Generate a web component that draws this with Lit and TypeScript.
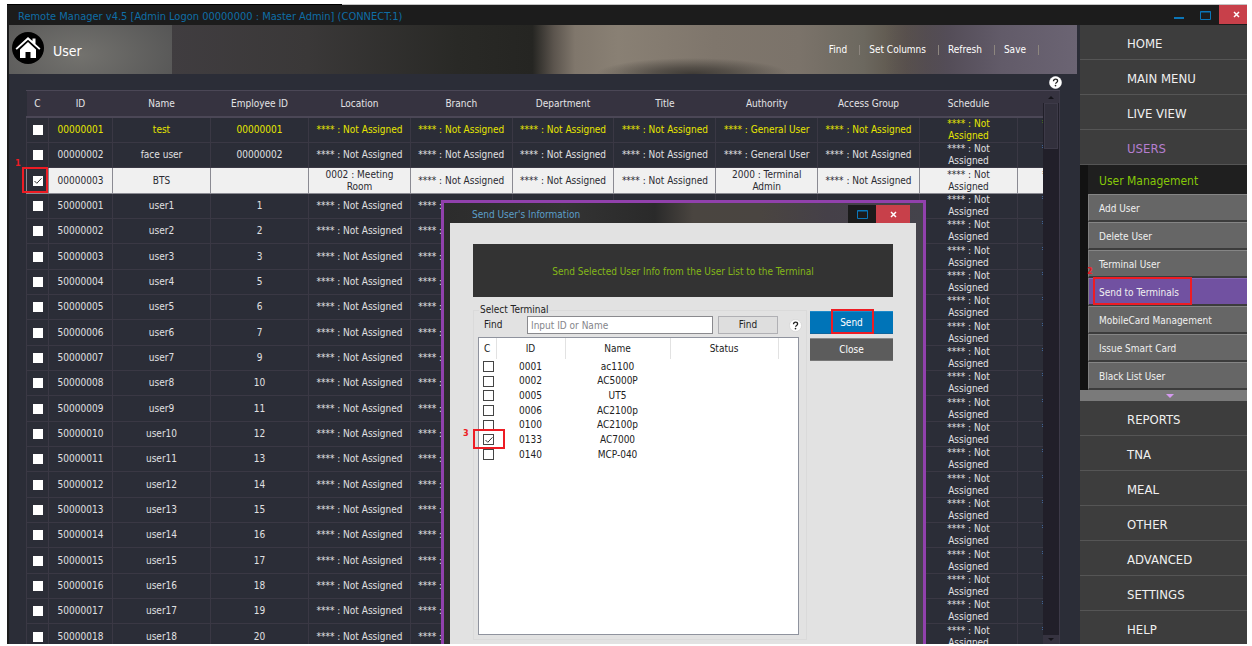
import { LitElement, html, css, svg } from "lit";
import { customElement, state } from "lit/decorators.js";
import { classMap } from "lit/directives/class-map.js";

interface User {
  id: string;
  name: string;
  emp: string;
  location?: string;
  authority?: string;
  tone?: string;
}

const NA = "**** : Not Assigned";

const users: User[] = [
  { id: "00000001", name: "test", emp: "00000001", authority: "**** : General User", tone: "admin" },
  { id: "00000002", name: "face user", emp: "00000002", authority: "**** : General User" },
  { id: "00000003", name: "BTS", emp: "", location: "0002 : Meeting Room", authority: "2000 : Terminal Admin", tone: "picked" },
  ...[1, 2, 3, 5, 6, 7, 9, 10, 11, 12, 13, 14, 15, 16, 17, 18, 19, 20].map((emp, i) => ({
    id: String(50000001 + i),
    name: `user${i + 1}`,
    emp: String(emp),
  })),
];

const columns = ["C", "ID", "Name", "Employee ID", "Location", "Branch", "Department", "Title", "Authority", "Access Group", "Schedule", ""];

const terminals: [string, string][] = [
  ["0001", "ac1100"],
  ["0002", "AC5000P"],
  ["0005", "UT5"],
  ["0006", "AC2100p"],
  ["0100", "AC2100p"],
  ["0133", "AC7000"],
  ["0140", "MCP-040"],
];

const checkbox = css`
  input[type="checkbox"] {
    appearance: none;
    display: block;
    margin: 0 auto;
    width: 10px;
    height: 10px;
    background: #fff;
  }
  input[type="checkbox"]:checked {
    background: #fff
      url("data:image/svg+xml,%3Csvg xmlns='http://www.w3.org/2000/svg' viewBox='0 0 10 10'%3E%3Cpath d='M1.5 5l2.300 2.300 4.700-5' fill='none' stroke='%23333' stroke-width='1'/%3E%3C/svg%3E")
      center / 10px 10px no-repeat;
  }
`;

const mark = css`
  .mark {
    position: absolute;
    border: 2px solid #ed1c24;
    pointer-events: none;
    z-index: 2;
  }
  .step {
    position: absolute;
    color: #ed1c24;
    font-size: 9px;
    font-weight: bold;
    line-height: 10px;
    z-index: 2;
  }
`;

const reset = css`
  * {
    box-sizing: border-box;
  }
  button {
    font: inherit;
    color: inherit;
    background: none;
    border: 0;
    padding: 0;
    margin: 0;
  }
  a {
    color: inherit;
    text-decoration: none;
  }
`;

const help = (ring: string) => svg`
  <svg width="13" height="13" viewBox="0 0 13 13">
    <circle cx="6.5" cy="6.5" r="6" fill="#fff" stroke=${ring} stroke-width="0.6"/>
    <path d="M4.5 5.2c0-1.3.9-2 2-2s2.100.7 2.100 1.800c0 1.500-2 1.500-2 2.800" fill="none" stroke="#222" stroke-width="1.300"/>
    <circle cx="6.500" cy="9.600" r="0.850" fill="#222"/>
  </svg>`;

@customElement("user-table")
class UserTable extends LitElement {
  @state() private checked = new Set(["00000003"]);

  static styles = [
    reset,
    checkbox,
    mark,
    css`
      :host {
        display: flex;
        min-height: 0;
        min-width: 0;
        border-top: 1px solid #4b4756;
      }
      .scroll {
        flex: 1;
        min-width: 0;
        margin-left: -26px;
        padding-left: 26px;
        overflow: hidden;
      }
      table {
        border-collapse: collapse;
        table-layout: fixed;
        width: 1084px;
      }
      .c0 { width: 22px; }
      .c1 { width: 64px; }
      .c2, .c3, .c10 { width: 98px; }
      .c11 { width: 92px; }
      th {
        height: 26px;
        padding: 0;
        font-weight: normal;
        color: #e4e4e6;
        background: #363340;
        border-bottom: 2px solid #4b4756;
      }
      td {
        height: 25px;
        padding: 0 3px;
        line-height: 12px;
        text-align: center;
        color: #e0e0e2;
        border: 1px solid #3a3844;
        border-top: 0;
      }
      tr:nth-child(3n) td { height: 26px; }
      td:nth-child(11), td:nth-child(12) { padding: 0 16px; }
      .select { padding: 0; position: relative; }
      .admin td { color: #e6e600; }
      .picked td {
        color: #2a2a30;
        background: #f0f0f0;
        border-color: #8a8a92;
      }
      .picked .select {
        background: transparent;
      }
      .mark { left: -5px; top: -1px; width: 26px; height: 26px; }
      .step { left: -12px; top: -10px; }
      .bar {
        width: 17px;
        background: #211f29;
        border-right: 1px solid #3d3a48;
        display: flex;
        flex-direction: column;
        align-items: center;
      }
      .up, .down {
        width: 100%;
        height: 12px;
        background: #363340;
        display: grid;
        place-items: center;
      }
      .thumb { width: 14px; height: 46px; background: #32303c; border: 1px solid #3d3a48; }
      .down { margin-top: auto; height: 9px; }
    `,
  ];

  private toggle(id: string) {
    const next = new Set(this.checked);
    next.has(id) ? next.delete(id) : next.add(id);
    this.checked = next;
  }

  render() {
    return html`
      <div class="scroll">
        <table>
          <colgroup>${columns.map((_, i) => html`<col class="c${i}" />`)}</colgroup>
          <thead><tr>${columns.map((c) => html`<th scope="col">${c}</th>`)}</tr></thead>
          <tbody>
            ${users.map(
              (u) => html`<tr class=${u.tone ?? ""}>
                <td class="select">
                  <input type="checkbox" aria-label="Select ${u.id}" .checked=${this.checked.has(u.id)} @change=${() => this.toggle(u.id)} />
                  ${u.tone === "picked" ? html`<span class="step">1</span><span class="mark"></span>` : ""}
                </td>
                <td>${u.id}</td><td>${u.name}</td><td>${u.emp}</td>
                <td>${u.location ?? NA}</td><td>${NA}</td><td>${NA}</td><td>${NA}</td>
                <td>${u.authority ?? NA}</td><td>${NA}</td><td>${NA}</td><td>${NA}</td>
              </tr>`
            )}
          </tbody>
        </table>
      </div>
      <div class="bar">
        <div class="up"><svg width="6" height="3"><path d="M0 3L3 0l3 3z" fill="#15141a" /></svg></div>
        <div class="thumb"></div>
        <div class="down"><svg width="6" height="3"><path d="M0 0l3 3 3-3z" fill="#15141a" /></svg></div>
      </div>
    `;
  }
}

@customElement("send-dialog")
class SendDialog extends LitElement {
  @state() private checked = new Set(["0133"]);

  static styles = [
    reset,
    checkbox,
    mark,
    css`
      :host {
        box-sizing: border-box;
        display: flex;
        flex-direction: column;
        padding: 0 7px 0 6px;
        border: 3px solid #9141ac;
        border-bottom: 0;
        background: linear-gradient(90deg, #2c2c2c, #333 25%, #2a2a2a 44%, #4a4540 52%, #4a4541 66%, #454048 80%, #44434b);
        color: #222;
      }
      .title {
        display: flex;
        align-items: center;
        height: 20px;
        padding: 2px 6px 0 22px;
        color: #5c9fc9;
      }
      .title span { flex: 1; padding-top: 2px; }
      .win { width: 28px; height: 18px; display: grid; place-items: center; background: #1b1b1b; }
      .close { width: 34px; background: #c8404a; }
      .body {
        flex: 1;
        min-height: 0;
        padding: 21px 23px 0;
        background: #e2e2e2;
      }
      .note {
        height: 53px;
        padding-top: 2px;
        display: grid;
        place-items: center;
        color: #84b818;
        background: #333;
      }
      .main { display: flex; gap: 3px; margin-top: 7px; align-items: flex-start; }
      fieldset {
        flex: 1;
        min-width: 0;
        margin: 0;
        padding: 0 4px 4px;
        border: 1px solid #dadada;
      }
      legend { margin-left: 1px; padding: 0 1px; line-height: 12px; }
      .find { display: flex; align-items: center; height: 18px; padding-left: 6px; }
      .find label { width: 43px; }
      .query {
        flex: 1;
        min-width: 0;
        height: 18px;
        padding: 0 3px;
        font: inherit;
        border: 1px solid #8a8a8e;
        border-radius: 0;
        background: #fff;
      }
      .query::placeholder { color: #85858a; opacity: 1; }
      .find button { width: 60px; height: 18px; margin: 0 11px 0 5px; border: 1px solid #b0b0b4; background: #dedede; }
      .find svg { display: block; }
      .list { height: 298px; margin: 3px 3px 0 0; background: #fff; border: 1px solid #8f939e; }
      table { border-collapse: collapse; table-layout: fixed; width: 100%; text-align: center; }
      th, td { padding: 0; font-weight: normal; }
      th { height: 21px; border-right: 1px solid #e2e2e2; }
      th:last-child { border: 0; }
      td { height: 15px; line-height: 14px; position: relative; }
      tr:nth-child(3n + 2) td { height: 14px; }
      .k0 { width: 17px; }
      .k1 { width: 69px; }
      .k2 { width: 105px; }
      .k3 { width: 108px; }
      td input[type="checkbox"] { width: 11px; height: 11px; margin-left: 4px; border: 1px solid #444; }
      .actions { width: 83px; padding-top: 7px; display: flex; flex-direction: column; gap: 4px; }
      .actions button {
        height: 23px;
        color: #fff;
        background: #5c5c5c;
        border-top: 1px solid #8a8a8a;
        border-bottom: 1px solid #777;
      }
      .actions .send { position: relative; background: #0074b8; border-top-color: #1d8aca; border-bottom-color: #10659c; }
      .send .mark { left: 21px; top: -3px; width: 43px; height: 25px; }
      td .mark { left: -6px; top: -3px; width: 32px; height: 20px; }
      td .step { left: -16px; top: -4px; }
    `,
  ];

  private toggle(id: string) {
    const next = new Set(this.checked);
    next.has(id) ? next.delete(id) : next.add(id);
    this.checked = next;
  }

  render() {
    return html`
      <div class="title">
        <span>Send User's Information</span>
        <button class="win" aria-label="Maximize"><svg width="11" height="10"><path d="M.5 1.500h10v8H.500zM.500 2h10" fill="none" stroke="#0b76b8" /></svg></button>
        <button class="win close" aria-label="Close"><svg width="7" height="7"><path d="M1 1l5 5M6 1L1 6" stroke="#fff" stroke-width="1.500" /></svg></button>
      </div>
      <div class="body">
        <div class="note">Send Selected User Info from the User List to the Terminal</div>
        <div class="main">
          <fieldset>
            <legend>Select Terminal</legend>
            <div class="find">
              <label for="query">Find</label>
              <input id="query" class="query" type="text" placeholder="Input ID or Name" />
              <button>Find</button>
              ${help("#ccc")}
            </div>
            <div class="list">
              <table>
                <colgroup><col class="k0" /><col class="k1" /><col class="k2" /><col class="k3" /><col /></colgroup>
                <thead><tr><th>C</th><th>ID</th><th>Name</th><th>Status</th><th></th></tr></thead>
                <tbody>
                  ${terminals.map(
                    ([id, name]) => html`<tr>
                      <td>
                        <input type="checkbox" aria-label="Select ${id}" .checked=${this.checked.has(id)} @change=${() => this.toggle(id)} />
                        ${id === "0133" ? html`<span class="step">3</span><span class="mark"></span>` : ""}
                      </td>
                      <td>${id}</td><td>${name}</td><td></td><td></td>
                    </tr>`
                  )}
                </tbody>
              </table>
            </div>
          </fieldset>
          <div class="actions">
            <button class="send">Send<span class="mark"></span></button>
            <button>Close</button>
          </div>
        </div>
      </div>
    `;
  }
}

@customElement("side-menu")
class SideMenu extends LitElement {
  static styles = [
    reset,
    mark,
    css`
      :host { display: block; background: #3d3d3d; color: #f0f0f0; }
      .item {
        display: flex;
        align-items: center;
        height: 35px;
        padding: 3px 0 0 47px;
        font-size: 13px;
        border-bottom: 1px solid #555;
      }
      .current { color: #b57fd0; }
      .sub { padding-left: 8px; background: #121212; }
      .head { display: flex; align-items: center; height: 29px; padding: 3px 0 0 11px; font-size: 12px; color: #86c808; background: #1f1f1f; }
      .entry {
        position: relative;
        display: flex;
        align-items: center;
        height: 28px;
        padding: 3px 0 0 10px;
        background: #666;
        border: solid #3c3c3c;
        border-width: 0 0 2px;
        border-left: 1px solid #808080;
        box-shadow: inset 0 1px #858585;
      }
      .on { background: #7151a1; box-shadow: inset 0 1px #8567b3; }
      .more { width: 100%; height: 11px; padding-left: 12px; display: grid; place-items: center; background: #7a7a7a; }
      .mark { left: 4px; top: -1px; width: 99px; height: 28px; }
      .step { left: -2px; top: -12px; }
    `,
  ];

  render() {
    const item = (t: string) => html`<a href="#" class=${classMap({ item: true, current: t === "USERS" })}>${t}</a>`;
    return html`
      <nav>
        ${["HOME", "MAIN MENU", "LIVE VIEW", "USERS"].map(item)}
        <div class="sub">
          <div class="head">User Management</div>
          ${["Add User", "Delete User", "Terminal User", "Send to Terminals", "MobileCard Management", "Issue Smart Card", "Black List User"].map((t) => {
            const on = t === "Send to Terminals";
            return html`<a href="#" class=${classMap({ entry: true, on })}>${t}${on ? html`<span class="step">2</span><span class="mark"></span>` : ""}</a>`;
          })}
        </div>
        <button class="more" aria-label="More"><svg width="8" height="4"><path d="M0 0h8L4 4z" fill="#d59af0" /></svg></button>
        ${["REPORTS", "TNA", "MEAL", "OTHER", "ADVANCED", "SETTINGS", "HELP"].map(item)}
      </nav>
    `;
  }
}

@customElement("app-root")
class AppRoot extends LitElement {
  static styles = [
    reset,
    css`
      :host {
        display: flex;
        box-sizing: border-box;
        height: 100vh;
        padding: 4px 5px 2px 7px;
        background: #fff;
        font-family: "DejaVu Sans Condensed", "Noto Sans", sans-serif;
        font-size: 10px;
        line-height: 12px;
      }
      .window {
        position: relative;
        flex: 1;
        min-width: 0;
        display: flex;
        flex-direction: column;
        overflow: hidden;
        padding-top: 1px;
        background: linear-gradient(90deg, #000 27%, #c4c4c4 27%) top / 100% 1px no-repeat, #2b2d37;
      }
      .titlebar {
        flex: none;
        display: flex;
        height: 20px;
        padding-left: 11px;
        background: #1c1c1c;
        color: #0f6ea6;
        font-size: 11px;
      }
      .titlebar span { flex: 1; align-self: center; padding-top: 3px; }
      .win { width: 27px; height: 19px; display: grid; place-items: center; }
      .close { background: #c8404a; width: 28px; padding-left: 7px; }
      .content { flex: 1; min-height: 0; display: flex; }
      .main {
        flex: 1;
        min-width: 0;
        display: flex;
        flex-direction: column;
        border-left: 2px solid #1c1c1c;
      }
      .banner {
        flex: none;
        display: flex;
        align-items: center;
        height: 49px;
        margin-right: 3px;
        padding-left: 3px;
        color: #fff;
        background:
          radial-gradient(ellipse 110px 60px at 70px 30px, #73726e, transparent) left / 163px 100% no-repeat,
          linear-gradient(#555, #555) left / 163px 100% no-repeat,
          radial-gradient(ellipse 9% 16px at 64% 100%, #3f3b36, #3f3b36aa 40%, transparent),
          linear-gradient(90deg, transparent 82%, #544d58 88%, #625b69 93%, #6b6473 100%),
          linear-gradient(90deg, #403d40 15%, #3a3838 28%, #292926 42%, #252522 49%, #5b544d 51%, #80776c 53%, #898074 57%, #7f766c 66%, #7b736a 74%, #6c685f 80%, #5a5248 84%, #4c463f 88%);
      }
      h1 { flex: 1; margin: 0; padding: 2px 0 0 9px; font-size: 14px; font-weight: normal; line-height: 18px; }
      .tools { display: flex; align-items: center; padding-right: 38px; }
      .tools button { padding: 0 12px 0 9px; }
      .tools i { width: 1px; height: 10px; background: #8d867f; }
      .help { display: flex; justify-content: flex-end; height: 16px; padding: 2px 18px 0 0; }
      user-table { flex: 1; margin: 0 20px 0 17px; }
      side-menu { flex: none; width: 167px; }
      send-dialog { position: absolute; left: 434px; top: 196px; bottom: 0; width: 485px; }
    `,
  ];

  render() {
    return html`
      <div class="window">
        <div class="titlebar">
          <span>Remote Manager v4.5 [Admin Logon 00000000 : Master Admin] (CONNECT:1)</span>
          <button class="win" aria-label="Minimize"><svg width="10" height="8"><path d="M0 7h10" stroke="#0b76b8" stroke-width="2" /></svg></button>
          <button class="win" aria-label="Maximize"><svg width="11" height="10"><path d="M.5 1.500h10v8H.500zM.500 2h10" fill="none" stroke="#0b76b8" /></svg></button>
          <button class="win close" aria-label="Close"><svg width="7" height="7"><path d="M1 1l5 5M6 1L1 6" stroke="#fff" stroke-width="1.500" /></svg></button>
        </div>
        <div class="content">
          <div class="main">
            <header class="banner">
              <svg width="32" height="40" viewBox="0 0 32 40">
                <circle cx="16" cy="18" r="16" fill="#000" />
                <path d="M8 19.500l8-7.500 8 7.500V28h-5.500v-6h-5v6H8z" fill="#fff" />
                <path d="M3.500 18.500L16 7l4.500 4V8.500h3V14l5 4.500-1.300 1.300L16 9.800 4.800 19.800z" fill="#fff" />
              </svg>
              <h1>User</h1>
              <div class="tools">
                <button>Find</button><i></i><button>Set Columns</button><i></i><button>Refresh</button><i></i><button>Save</button><i></i>
              </div>
            </header>
            <div class="help">${help("#fff")}</div>
            <user-table></user-table>
          </div>
          <side-menu></side-menu>
        </div>
        <send-dialog role="dialog" aria-label="Send User's Information"></send-dialog>
      </div>
    `;
  }
}
